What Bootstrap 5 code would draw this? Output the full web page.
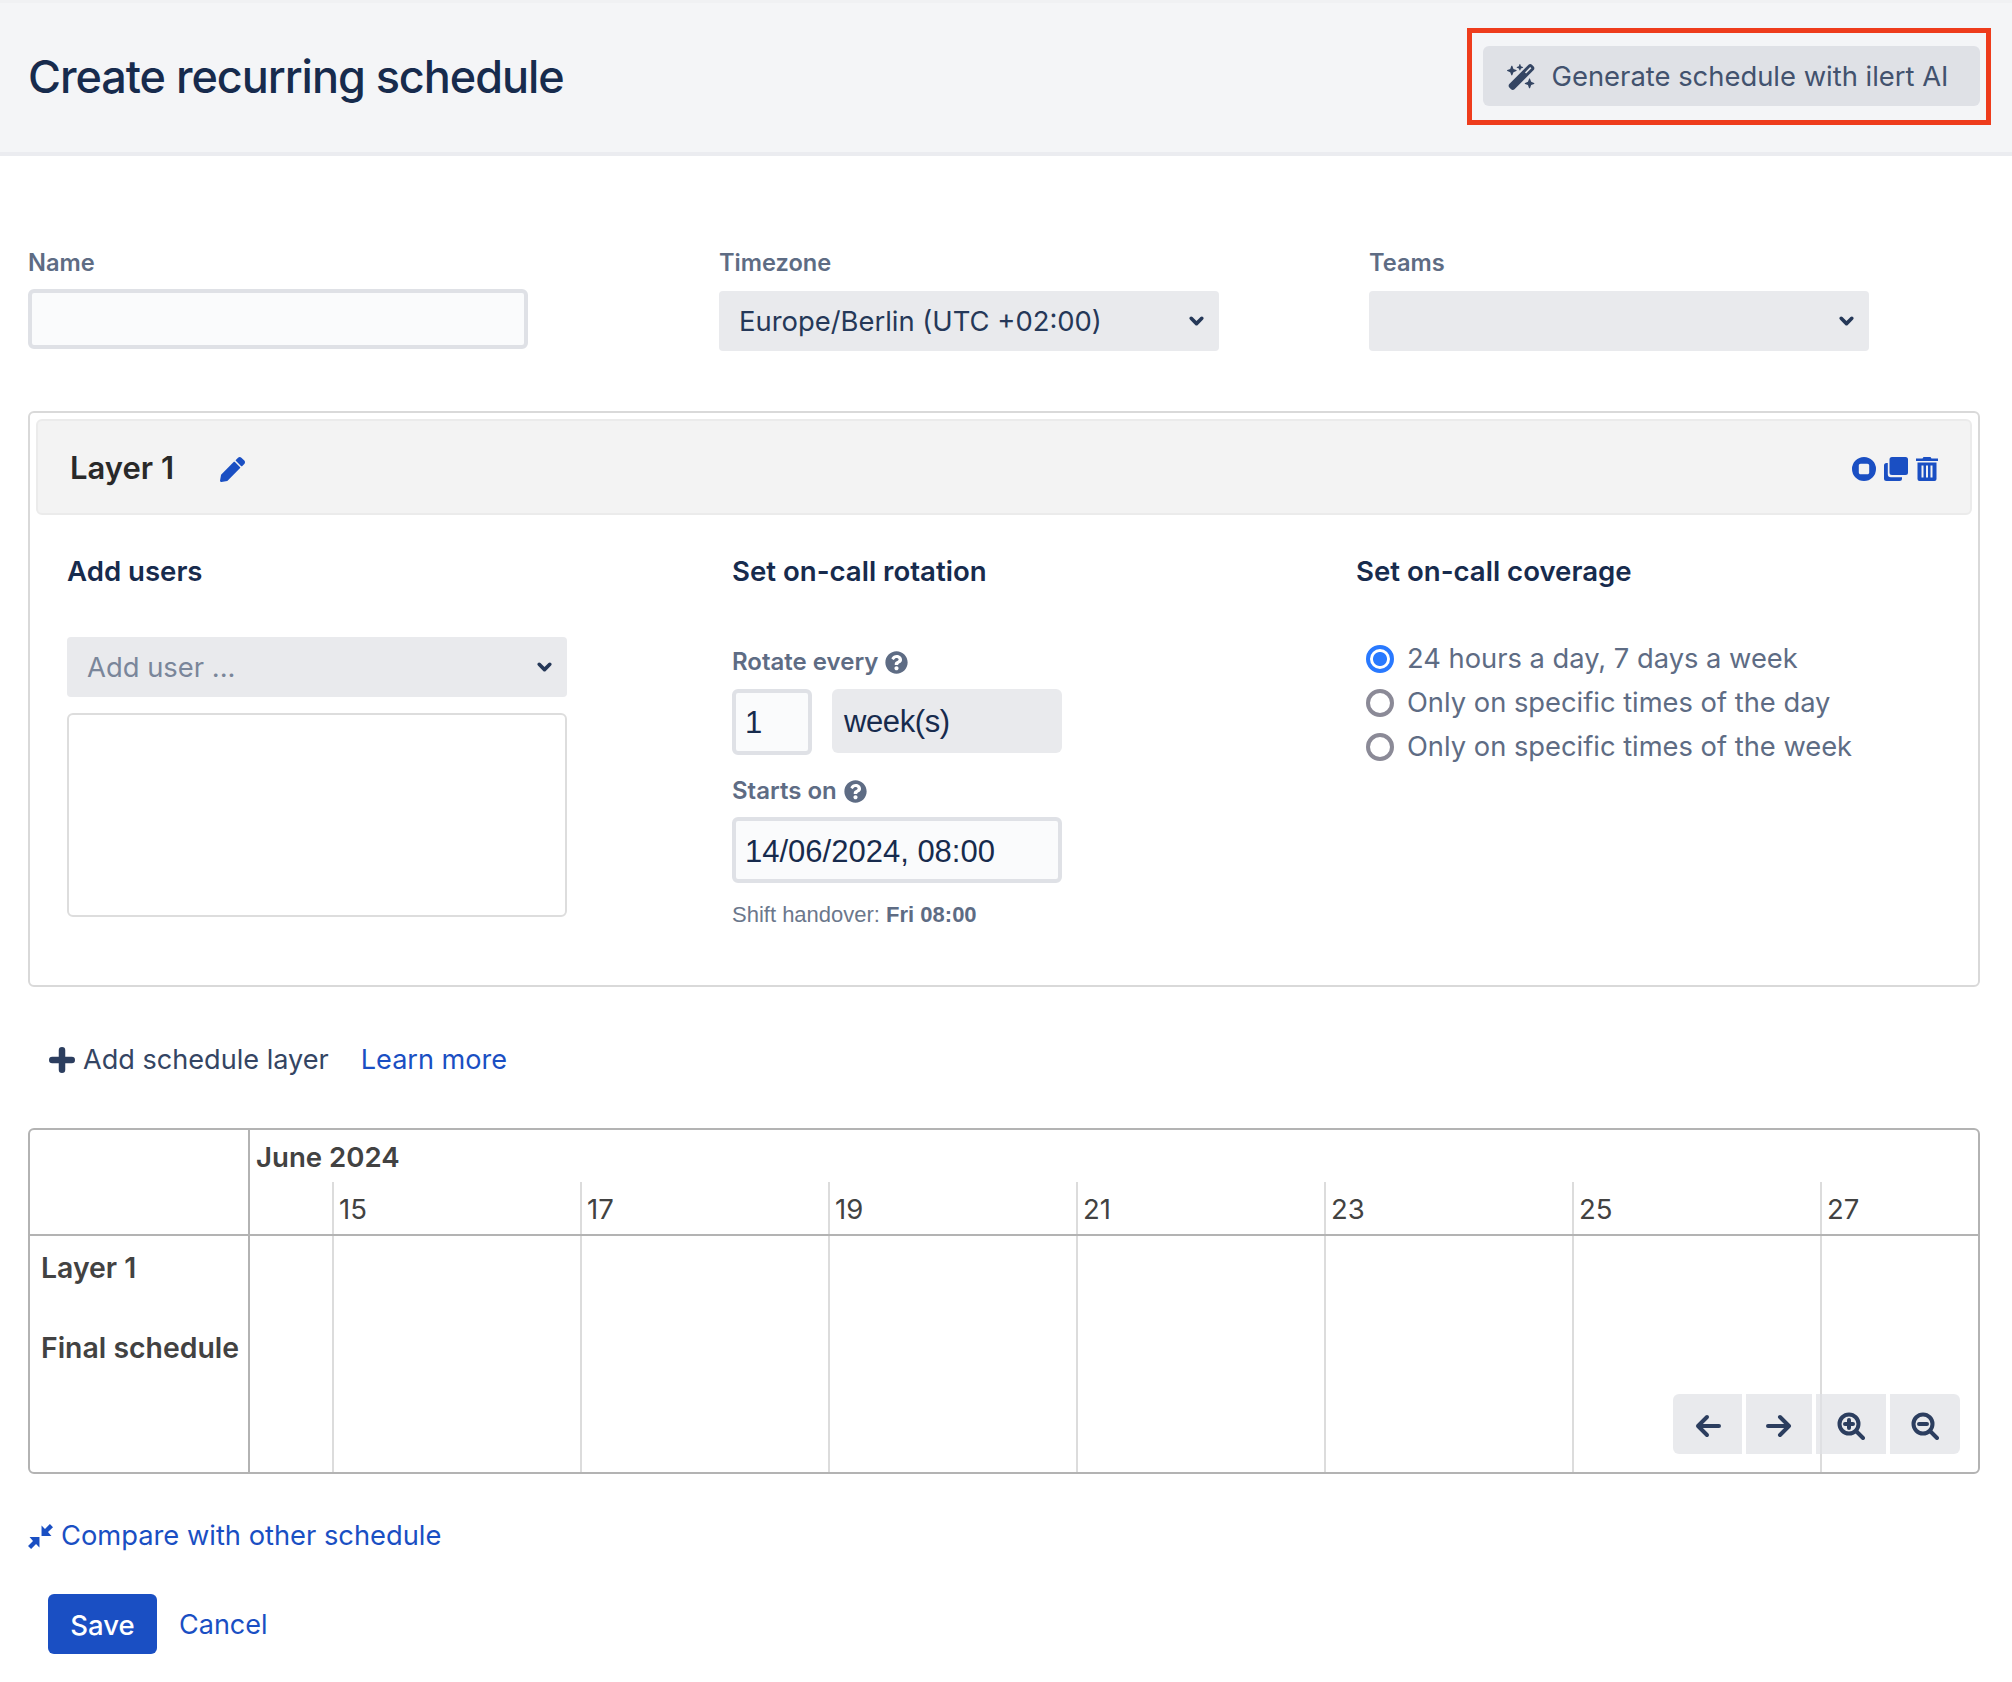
<!DOCTYPE html>
<html lang="en">
  <head>
    <meta charset="UTF-8" />
    <meta name="viewport" content="width=device-width, initial-scale=1.0" />
    <title>Create recurring schedule</title>
    <link href="https://cdn.jsdelivr.net/npm/bootstrap@5.3.0/dist/css/bootstrap.min.css" rel="stylesheet" />
    <style>
      body {
        font-family: Inter, "Liberation Sans", sans-serif;
        font-size: 26px;
        color: #172b4d;
        background: #fff;
      }
      a { text-decoration: none; color: #1a4fc3; }
      .page-head {
        height: 156px;
        background: #f4f5f7;
        border-top: 3px solid #f0f1f3;
        border-bottom: 4px solid #ebecf0;
        padding: 0 21px 0 28px;
      }
      .page-title { font-size: 45px; font-weight: 500; letter-spacing: -1.05px; margin: 0 0 2px; }
      .ai-mark { border: 5px solid #ee3c1c; padding: 13px 6px 14px 11px; margin-bottom: 2px; }
      .ai-btn {
        height: 60px;
        width: 497px;
        background: #dfe1e6;
        border: 0;
        border-radius: 6px;
        color: #42526e;
        font-size: 27.4px;
        gap: 16px;
        padding: 2px 14px 0 6px;
      }
      .ai-btn svg { width: 29px; height: 26px; fill: #344563; }
      .page-body { padding: 0 32px 0 28px; }
      .top-fields { padding-top: 89px; }
      .field-name { width: 691px; }
      .field-zone { width: 650px; }
      .field-team { width: 500px; }
      .field-label { font-size: 23.6px; font-weight: 600; color: #5e6c84; margin-bottom: 9px; line-height: 36px; display: block; }
      .text-box {
        height: 60px;
        width: 500px;
        margin-top: -1px;
        border: 4px solid #dfe1e6;
        border-radius: 6px;
        background: #fafbfc;
      }
      .pick-box.form-select {
        height: 60px;
        width: 500px;
        border: 0;
        border-radius: 4px;
        background-color: #e9eaed;
        background-image: url("data:image/svg+xml,%3csvg xmlns='http://www.w3.org/2000/svg' viewBox='0 0 16 16'%3e%3cpath fill='none' stroke='%23253858' stroke-linecap='round' stroke-linejoin='round' stroke-width='3.4' d='m3 5 5 5 5-5'/%3e%3c/svg%3e");
        background-size: 17px 17px;
        background-position: right 14px center;
        color: #253858;
        font-size: 27.4px;
        padding: 2px 20px 0;
        margin-top: 10px;
      }
      .layer-wrap {
        margin-top: 60px;
        height: 576px;
        border: 2px solid #d9d9d9;
        border-radius: 6px;
        padding: 6px;
      }
      .layer-head {
        height: 96px;
        background: #f3f3f3;
        border: 2px solid #ebebeb;
        border-radius: 6px;
        padding: 3px 32px 0;
      }
      .layer-name { font-size: 31px; font-weight: 600; color: #292929; width: 150px; }
      .icon-edit { width: 25px; height: 25px; fill: #1a4fc3; margin-top: 1px; }
      .layer-tools { gap: 8px; }
      .layer-tools svg { height: 24px; fill: #1a4fc3; }
      .layer-cols { padding: 36px 0 0 31px; }
      .col-users { width: 665px; }
      .col-rotate { width: 624px; }
      .col-title { font-size: 27.6px; font-weight: 600; color: #172b4d; line-height: 40px; margin: 0; }
      .users-pick.form-select { margin-top: 46px; color: #7a869a; }
      .users-box { height: 204px; width: 500px; border: 2px solid #dddddd; border-radius: 6px; margin-top: 16px; }
      .small-label { font-size: 24px; font-weight: 600; color: #5e6c84; line-height: 36px; gap: 7px; }
      .small-label svg { width: 23px; height: 23px; fill: #5e6c84; }
      .label-first { margin-top: 53px; margin-bottom: 9px; }
      .label-next { margin-top: 18px; margin-bottom: 8px; }
      .helv { font-family: "Liberation Sans", sans-serif; font-size: 31px; color: #172b4d; }
      .num-box {
        width: 80px; height: 66px;
        border: 4px solid #dfe1e6; border-radius: 6px; background: #fafbfc;
        padding-left: 9px; line-height: 60px;
      }
      .unit-box {
        width: 230px; height: 64px; margin-left: 20px;
        border-radius: 6px; background: #e9eaed;
        padding-left: 12px; line-height: 66px; letter-spacing: -0.4px;
      }
      .date-box {
        width: 330px; height: 66px;
        border: 4px solid #dfe1e6; border-radius: 6px; background: #fafbfc;
        padding-left: 9px; line-height: 62px;
      }
      .handover { font-family: "Liberation Sans", sans-serif; font-size: 22px; color: #6b778c; margin-top: 15px; }
      .handover b { color: #5e6c84; }
      .cover-list { padding: 46px 0 0 10px; }
      .cover-item { height: 44px; gap: 13px; color: #5e6c84; font-size: 27.3px; }
      .cover-item .form-check-input {
        width: 28px; height: 28px; margin: 0;
        border: 4px solid #8b8a97;
        background: #fff;
      }
      .cover-item .form-check-input:checked {
        border-color: #2979ff;
        background-color: #fff;
        background-image: radial-gradient(circle, #2979ff 0 6.5px, transparent 7.5px);
      }
      .add-row { padding: 53px 0 0 21px; height: 141px; gap: 32px; }
      .add-layer { color: #344563; gap: 8px; font-size: 27.1px; }
      .add-layer svg { width: 26px; height: 26px; fill: #2c3e5f; }
      .learn-link { font-size: 27.1px; }
      .cal-wrap {
        position: relative;
        width: 1952px;
        height: 346px;
        border: 2px solid #b3b3b3;
        border-radius: 6px;
        color: #424242;
      }
      .cal-side { width: 220px; border-right: 2px solid #b3b3b3; flex: none; }
      .cal-side-top { height: 106px; border-bottom: 2px solid #b3b3b3; }
      .cal-layer { padding-left: 11px; font-size: 28.4px; font-weight: 600; line-height: 64px; margin-bottom: 16px; white-space: nowrap; }
      .cal-main { flex: 1; min-width: 0; }
      .cal-month { height: 52px; padding: 9px 0 0 6px; font-size: 27.6px; font-weight: 600; line-height: 36px; }
      .cal-grid { display: grid; grid-template-columns: 82px repeat(6, 248px) 1fr; }
      .cal-grid > div { border-left: 2px solid #dcdcdc; }
      .cal-grid > div:first-child { border-left: 0; }
      .cal-days { height: 54px; border-bottom: 2px solid #b3b3b3; }
      .cal-days > div { padding: 9px 0 0 5px; font-size: 27.5px; line-height: 36px; }
      .cal-rows { height: 236px; }
      .cal-tools { position: absolute; right: 18px; bottom: 18px; gap: 4px; }
      .cal-btn {
        width: 70px; height: 60px; border: 0; padding: 0;
        background: rgba(223, 225, 230, 0.7);
      }
      .cal-btn.tool-a { width: 69px; border-radius: 6px 0 0 6px; }
      .cal-btn.tool-b { width: 66px; }
      .cal-btn.tool-d { border-radius: 0 6px 6px 0; }
      .cal-btn svg { width: 28px; height: 28px; fill: none; stroke: #2c3e5f; stroke-width: 4; stroke-linecap: round; stroke-linejoin: round; }
      .compare-link { margin-top: 44px; gap: 8px; font-size: 27.3px; line-height: 36px; }
      .compare-link svg { width: 25px; height: 25px; fill: #1a4fc3; stroke: none; }
      .save-row { margin-top: 40px; padding-left: 20px; gap: 22px; }
      .save-btn {
        width: 109px; height: 60px; padding: 3px 0 0;
        background: #1a4fc3; border: 0; border-radius: 6px;
        font-size: 27.5px; font-weight: 500; color: #fff;
      }
      .cancel-link { font-size: 27px; padding-top: 3px; }
    </style>
  </head>
  <body>
    <header class="page-head d-flex align-items-center justify-content-between">
      <h1 class="page-title">Create recurring schedule</h1>
      <div class="ai-mark">
        <button type="button" class="ai-btn d-flex align-items-center justify-content-center">
          <svg viewBox="0 0 576 512"><path d="M234.7 42.7L197 56.8c-3 1.1-5 4-5 7.2s2 6.1 5 7.2l37.7 14.1L248.8 123c1.1 3 4 5 7.2 5s6.1-2 7.2-5l14.1-37.7L315 71.2c3-1.1 5-4 5-7.2s-2-6.1-5-7.2L277.3 42.7 263.2 5c-1.1-3-4-5-7.2-5s-6.1 2-7.2 5L234.7 42.7zM46.1 395.4c-18.7 18.7-18.7 49.1 0 67.9l34.6 34.6c18.7 18.7 49.1 18.7 67.9 0L529.9 116.5c18.7-18.7 18.7-49.1 0-67.9L495.3 14.1c-18.7-18.7-49.1-18.7-67.9 0L46.1 395.4zM484.6 82.6l-105 105-23.3-23.3 105-105 23.3 23.3zM7.5 117.2C3 118.9 0 123.2 0 128s3 9.1 7.5 10.8L64 160l21.2 56.5c1.7 4.5 6 7.5 10.8 7.5s9.1-3 10.8-7.5L128 160l56.5-21.2c4.5-1.7 7.5-6 7.5-10.8s-3-9.1-7.5-10.8L128 96 106.8 39.5C105.1 35 100.8 32 96 32s-9.1 3-10.8 7.5L64 96 7.5 117.2zm352 256c-4.5 1.7-7.5 6-7.5 10.8s3 9.1 7.5 10.8L416 416l21.2 56.5c1.7 4.5 6 7.5 10.8 7.5s9.1-3 10.8-7.5L480 416l56.5-21.2c4.5-1.7 7.5-6 7.5-10.8s-3-9.1-7.5-10.8L480 352l-21.2-56.5c-1.7-4.5-6-7.5-10.8-7.5s-9.1 3-10.8 7.5L416 352l-56.5 21.2z"/></svg>
          <span>Generate schedule with ilert AI</span>
        </button>
      </div>
    </header>

    <main class="page-body">
      <div class="top-fields d-flex">
        <div class="field-name">
          <label class="field-label">Name</label>
          <div class="text-box"></div>
        </div>
        <div class="field-zone">
          <label class="field-label">Timezone</label>
          <select class="form-select pick-box"><option>Europe/Berlin (UTC +02:00)</option></select>
        </div>
        <div class="field-team">
          <label class="field-label">Teams</label>
          <select class="form-select pick-box"><option></option></select>
        </div>
      </div>

      <section class="layer-wrap">
        <div class="layer-head d-flex align-items-center">
          <span class="layer-name">Layer 1</span>
          <svg class="icon-edit" viewBox="0 0 512 512"><path d="M497.9 142.1l-46.1 46.1c-4.7 4.7-12.3 4.7-17 0l-111-111c-4.7-4.7-4.7-12.3 0-17l46.1-46.1c18.7-18.7 49.1-18.7 67.9 0l60.1 60.1c18.8 18.7 18.8 49.1 0 67.9zM284.2 99.8L21.6 362.4.4 483.9c-2.9 16.4 11.4 30.6 27.8 27.8l121.5-21.3 262.6-262.6c4.7-4.7 4.7-12.3 0-17l-111-111c-4.8-4.7-12.4-4.7-17.1 0z"/></svg>
          <div class="layer-tools d-flex align-items-center ms-auto">
            <svg viewBox="0 0 24 24" width="24"><path fill-rule="evenodd" d="M12 0a12 12 0 1 0 0 24 12 12 0 0 0 0-24zM8.6 6.8h6.8c1 0 1.8.8 1.8 1.8v6.8c0 1-.8 1.8-1.8 1.8H8.6c-1 0-1.8-.8-1.8-1.8V8.6c0-1 .8-1.8 1.8-1.8z"/></svg>
            <svg viewBox="0 0 24 24" width="24"><path d="M8 0h13.5A2.5 2.5 0 0 1 24 2.500V15.500a2.500 2.500 0 0 1-2.500 2.500H8a2.500 2.500 0 0 1-2.500-2.500V2.500A2.500 2.500 0 0 1 8 0z"/><path d="M3.800 6v11.200A3 3 0 0 0 6.800 20.200H18v1.300A2.500 2.500 0 0 1 15.500 24H2.500A2.500 2.500 0 0 1 0 21.500V8.500A2.500 2.500 0 0 1 2.500 6z"/></svg>
            <svg viewBox="0 0 22 24" width="22"><path d="M7.500 0h7l1 1.500H22v2.500H0V1.500h6.500z"/><path fill-rule="evenodd" d="M1.500 5.500h19V22a2 2 0 0 1-2 2h-15a2 2 0 0 1-2-2zM5.500 8.500v12h2v-12zM10 8.500v12h2v-12zM14.500 8.500v12h2v-12z"/></svg>
          </div>
        </div>

        <div class="layer-cols d-flex">
          <div class="col-users">
            <h2 class="col-title">Add users</h2>
            <select class="form-select pick-box users-pick"><option>Add user ...</option></select>
            <div class="users-box"></div>
          </div>
          <div class="col-rotate">
            <h2 class="col-title">Set on-call rotation</h2>
            <div class="small-label label-first d-flex align-items-center">
              Rotate every
              <svg viewBox="0 0 512 512"><use href="#q-circle" /></svg>
            </div>
            <div class="d-flex align-items-start helv">
              <div class="num-box">1</div>
              <div class="unit-box">week(s)</div>
            </div>
            <div class="small-label label-next d-flex align-items-center">
              Starts on
              <svg viewBox="0 0 512 512"><path id="q-circle" d="M504 256c0 136.997-111.043 248-248 248S8 392.997 8 256C8 119.083 119.043 8 256 8s248 111.083 248 248zM262.655 90c-54.497 0-89.255 22.957-116.549 63.758-3.536 5.286-2.353 12.415 2.715 16.258l34.699 26.31c5.205 3.947 12.621 3.008 16.665-2.122 17.864-22.658 30.113-35.797 57.303-35.797 20.429 0 45.698 13.148 45.698 32.958 0 14.976-12.363 22.667-32.534 33.976C247.128 238.528 216 254.941 216 296v4c0 6.627 5.373 12 12 12h56c6.627 0 12-5.373 12-12v-1.333c0-28.462 83.186-29.647 83.186-106.667 0-58.002-60.165-102-116.531-102zM256 338c-25.365 0-46 20.635-46 46 0 25.364 20.635 46 46 46s46-20.636 46-46c0-25.365-20.635-46-46-46z"/></svg>
            </div>
            <div class="date-box helv">14/06/2024, 08:00</div>
            <div class="handover">Shift handover: <b>Fri 08:00</b></div>
          </div>
          <div>
            <h2 class="col-title">Set on-call coverage</h2>
            <div class="cover-list">
              <label class="cover-item d-flex align-items-center"><input class="form-check-input" type="radio" name="cover" checked />24 hours a day, 7 days a week</label>
              <label class="cover-item d-flex align-items-center"><input class="form-check-input" type="radio" name="cover" />Only on specific times of the day</label>
              <label class="cover-item d-flex align-items-center"><input class="form-check-input" type="radio" name="cover" />Only on specific times of the week</label>
            </div>
          </div>
        </div>
      </section>

      <div class="add-row d-flex align-items-start">
        <span class="add-layer d-flex align-items-center">
          <svg viewBox="0 0 24 24"><path d="M12 0a3 3 0 0 1 3 3v6h6a3 3 0 0 1 0 6h-6v6a3 3 0 0 1-6 0v-6H3a3 3 0 0 1 0-6h6V3a3 3 0 0 1 3-3z"/></svg>
          Add schedule layer
        </span>
        <a class="learn-link" href="#">Learn more</a>
      </div>

      <section class="cal-wrap d-flex">
        <div class="cal-side">
          <div class="cal-side-top"></div>
          <div class="cal-layer">Layer 1</div>
          <div class="cal-layer">Final schedule</div>
        </div>
        <div class="cal-main">
          <div class="cal-month">June 2024</div>
          <div class="cal-grid cal-days">
            <div></div><div>15</div><div>17</div><div>19</div><div>21</div><div>23</div><div>25</div><div>27</div>
          </div>
          <div class="cal-grid cal-rows">
            <div></div><div></div><div></div><div></div><div></div><div></div><div></div><div></div>
          </div>
        </div>
        <div class="cal-tools d-flex">
          <button type="button" class="cal-btn tool-a"><svg viewBox="0 0 28 28"><path d="M25 14H4M13 5l-9 9 9 9" /></svg></button>
          <button type="button" class="cal-btn tool-b"><svg viewBox="0 0 28 28"><path d="M3 14h21M15 5l9 9-9 9" /></svg></button>
          <button type="button" class="cal-btn tool-c"><svg viewBox="0 0 28 28"><circle cx="12" cy="12" r="9.500" /><path d="M12 8v8M8 12h8M19.500 19.500l6.500 6.500" /></svg></button>
          <button type="button" class="cal-btn tool-d"><svg viewBox="0 0 28 28"><circle cx="12" cy="12" r="9.500" /><path d="M8 12h8M19.500 19.500l6.500 6.500" /></svg></button>
        </div>
      </section>

      <a class="compare-link d-flex align-items-center" href="#">
        <svg viewBox="0 0 24 24"><path d="M13 11.500V1.500l3.300 3.300L21 0l3 3-4.800 4.700 3.300 3.800zM11 12.500v10l-3.300-3.300L3 24l-3-3 4.800-4.700-3.300-3.800z" /></svg>
        Compare with other schedule
      </a>

      <div class="save-row d-flex align-items-center">
        <button type="button" class="btn save-btn">Save</button>
        <a class="cancel-link" href="#">Cancel</a>
      </div>
    </main>
  </body>
</html>
